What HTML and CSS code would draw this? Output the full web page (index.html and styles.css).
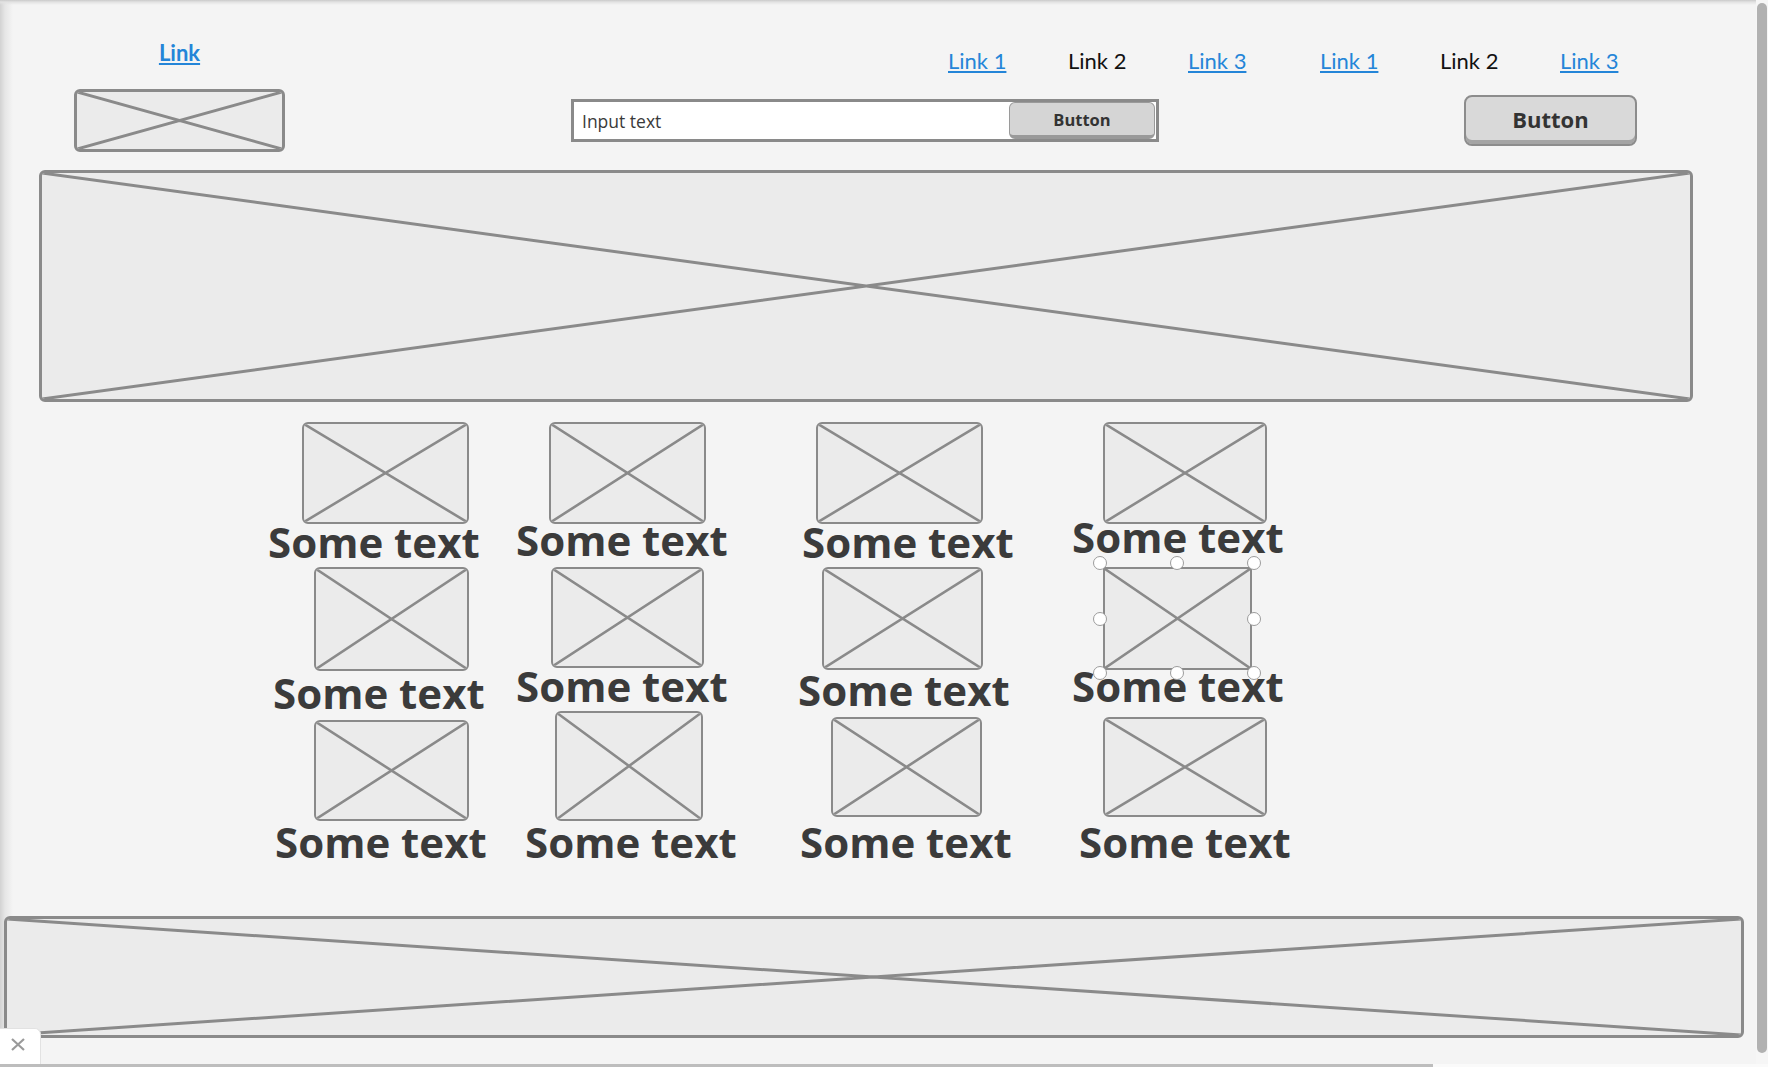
FILE: index.html
```html
<!DOCTYPE html>
<html lang="en">
<head>
<meta charset="utf-8">
<title>Wireframe</title>
<link rel="stylesheet" href="styles.css">
</head>
<body>
<div class="screen">
  <div class="canvas">
    <header class="header">
      <div class="brand">
        <a class="brand-link" href="#">Link</a>
        <div class="ph logo"><svg class="x" viewBox="0 0 100 100" preserveAspectRatio="none"><path d="M0 0L100 100M100 0L0 100"/></svg></div>
      </div>
      <div class="header-main">
        <nav class="nav">
          <div class="nav-group">
            <a class="nav-item" href="#">Link 1</a>
            <span class="nav-item current">Link 2</span>
            <a class="nav-item" href="#">Link 3</a>
          </div>
          <div class="nav-group">
            <a class="nav-item" href="#">Link 1</a>
            <span class="nav-item current">Link 2</span>
            <a class="nav-item" href="#">Link 3</a>
          </div>
        </nav>
        <div class="actions">
          <div class="search">
            <span class="search-text">Input text</span>
            <button class="search-btn" type="button">Button</button>
          </div>
          <button class="btn-main" type="button">Button</button>
        </div>
      </div>
    </header>

    <div class="ph hero"><svg class="x" viewBox="0 0 100 100" preserveAspectRatio="none"><path d="M0 0L100 100M100 0L0 100"/></svg></div>

    <section class="gallery">
      <div class="col col1">
        <div class="card"><div class="ph t11"><svg class="x" viewBox="0 0 100 100" preserveAspectRatio="none"><path d="M0 0L100 100M100 0L0 100"/></svg></div><div class="cap s11">Some text</div></div>
        <div class="card"><div class="ph t12"><svg class="x" viewBox="0 0 100 100" preserveAspectRatio="none"><path d="M0 0L100 100M100 0L0 100"/></svg></div><div class="cap s12">Some text</div></div>
        <div class="card"><div class="ph t13"><svg class="x" viewBox="0 0 100 100" preserveAspectRatio="none"><path d="M0 0L100 100M100 0L0 100"/></svg></div><div class="cap s13">Some text</div></div>
      </div>
      <div class="col col2">
        <div class="card"><div class="ph t21"><svg class="x" viewBox="0 0 100 100" preserveAspectRatio="none"><path d="M0 0L100 100M100 0L0 100"/></svg></div><div class="cap s21">Some text</div></div>
        <div class="card"><div class="ph t22"><svg class="x" viewBox="0 0 100 100" preserveAspectRatio="none"><path d="M0 0L100 100M100 0L0 100"/></svg></div><div class="cap s22">Some text</div></div>
        <div class="card"><div class="ph t23"><svg class="x" viewBox="0 0 100 100" preserveAspectRatio="none"><path d="M0 0L100 100M100 0L0 100"/></svg></div><div class="cap s23">Some text</div></div>
      </div>
      <div class="col col3">
        <div class="card"><div class="ph t31"><svg class="x" viewBox="0 0 100 100" preserveAspectRatio="none"><path d="M0 0L100 100M100 0L0 100"/></svg></div><div class="cap s31">Some text</div></div>
        <div class="card"><div class="ph t32"><svg class="x" viewBox="0 0 100 100" preserveAspectRatio="none"><path d="M0 0L100 100M100 0L0 100"/></svg></div><div class="cap s32">Some text</div></div>
        <div class="card"><div class="ph t33"><svg class="x" viewBox="0 0 100 100" preserveAspectRatio="none"><path d="M0 0L100 100M100 0L0 100"/></svg></div><div class="cap s33">Some text</div></div>
      </div>
      <div class="col col4">
        <div class="card"><div class="ph t41"><svg class="x" viewBox="0 0 100 100" preserveAspectRatio="none"><path d="M0 0L100 100M100 0L0 100"/></svg></div><div class="cap s41">Some text</div></div>
        <div class="card">
          <div class="sel t42">
            <div class="ph square"><svg class="x" viewBox="0 0 100 100" preserveAspectRatio="none"><path d="M0 0L100 100M100 0L0 100"/></svg></div>
            <span class="handle h-tl"></span><span class="handle h-tc"></span><span class="handle h-tr"></span>
            <span class="handle h-ml"></span><span class="handle h-mr"></span>
            <span class="handle h-bl"></span><span class="handle h-bc"></span><span class="handle h-br"></span>
          </div>
          <div class="cap s42">Some text</div>
        </div>
        <div class="card"><div class="ph t43"><svg class="x" viewBox="0 0 100 100" preserveAspectRatio="none"><path d="M0 0L100 100M100 0L0 100"/></svg></div><div class="cap s43">Some text</div></div>
      </div>
    </section>

    <div class="ph footer"><svg class="x" viewBox="0 0 100 100" preserveAspectRatio="none"><path d="M0 0L100 100M100 0L0 100"/></svg></div>

    <div class="close-tab"><svg class="close-x" viewBox="0 0 14 13"><path d="M1 1L13 12M13 1L1 12"/></svg></div>
  </div>
  <div class="vscroll"><div class="vthumb"></div></div>
</div>
<div class="hscroll"><div class="hthumb"></div></div>
</body>
</html>
```

FILE: styles.css
```css
* { box-sizing: border-box; }

html, body {
  margin: 0;
  padding: 0;
  width: 1768px;
  height: 1067px;
  overflow: hidden;
  background: #fafafa;
  font-family: "Open Sans", "Liberation Sans", sans-serif;
}

.screen {
  display: flex;
  width: 1768px;
  height: 1064px;
}

.canvas {
  position: relative;
  width: 1756px;
  height: 1064px;
  background:
    linear-gradient(to bottom, #c9c9c9 0, #e2e2e2 2px, rgba(244,244,244,0) 5px),
    linear-gradient(to right, #d2d2d2 0, #e6e6e6 5px, #f4f4f4 13px);
  background-color: #f4f4f4;
  overflow: hidden;
}

/* placeholder image */
.ph {
  background: #ebebeb;
  border: 2px solid #8a8a8a;
  border-radius: 6px;
  overflow: hidden;
}
.ph .x {
  display: block;
  width: 100%;
  height: 100%;
}
.ph .x path {
  stroke: #8a8a8a;
  stroke-width: 2.6;
  fill: none;
  vector-effect: non-scaling-stroke;
}

/* header */
.header {
  display: flex;
  align-items: flex-start;
}

.brand {
  margin-left: 74px;
  width: 211px;
  display: flex;
  flex-direction: column;
  align-items: center;
}

.brand-link {
  margin-top: 40px;
  font-family: Lato, "Open Sans", sans-serif;
  font-weight: 700;
  font-size: 22px;
  line-height: 26px;
  color: #2485d8;
  text-decoration: underline;
  text-decoration-thickness: 2px;
  text-underline-offset: 2px;
}

.logo {
  margin-top: 23px;
  width: 211px;
  height: 63px;
  border-width: 3px;
}
.logo .x path { stroke-width: 3; }

.header-main {
  display: flex;
  flex-direction: column;
}

.nav {
  display: flex;
  margin-left: 663px;
  margin-top: 48px;
  gap: 12px;
}
.nav-group {
  display: flex;
}
.nav-item {
  width: 120px;
  font-family: Lato, "Open Sans", sans-serif;
  font-size: 22px;
  line-height: 26px;
  color: #2485d8;
  text-decoration: underline;
  text-decoration-thickness: 2px;
  text-underline-offset: 2px;
}
.nav-item.current {
  color: #111;
  text-decoration: none;
}

.actions {
  display: flex;
  align-items: flex-start;
}

.search {
  margin-left: 286px;
  margin-top: 25px;
  width: 588px;
  height: 43px;
  border: 3px solid #8a8a8a;
  background: #fff;
  display: flex;
  align-items: stretch;
}
.search-text {
  flex: 1;
  padding-left: 8px;
  display: flex;
  align-items: center;
  font-size: 17.5px;
  color: #3a3a3a;
}
.search-btn {
  width: 146px;
  margin: 0 1px 0 0;
  padding: 0;
  background: #d5d5d5;
  border: 1px solid #9a9a9a;
  border-bottom: 4px solid #9a9a9a;
  border-radius: 6px;
  font-family: "Open Sans", sans-serif;
  font-weight: 700;
  font-size: 16.5px;
  color: #333;
}

.btn-main {
  margin-left: 305px;
  margin-top: 21px;
  width: 173px;
  height: 51px;
  padding: 0 0 3px;
  background: #d9d9d9;
  border: 2px solid #8c8c8c;
  border-radius: 8px;
  box-shadow: inset 0 -4px 0 #a4a4a4;
  font-family: "Open Sans", sans-serif;
  font-weight: 700;
  font-size: 22px;
  color: #333;
}

/* hero */
.hero {
  margin-top: 18px;
  margin-left: 39px;
  width: 1654px;
  height: 232px;
  border-width: 3px;
}
.hero .x path { stroke-width: 3; }

/* gallery */
.gallery {
  display: flex;
  align-items: flex-start;
  padding-left: 268px;
  margin-top: 20px;
}
.col {
  display: flex;
  flex-direction: column;
}
.col1 { width: 248px; }
.col2 { width: 282px; }
.col3 { width: 274px; }
.col4 { width: 230px; }

.card {
  display: flex;
  flex-direction: column;
  align-items: flex-start;
}

.cap {
  font-family: "Open Sans", sans-serif;
  font-weight: 700;
  font-size: 42px;
  line-height: 43px;
  color: #3b3b3b;
  white-space: nowrap;
}

/* column 1 */
.t11 { width: 167px; height: 102px; margin-left: 34px; }
.s11 { margin-top: -4px; margin-left: 0; }
.t12 { width: 155px; height: 104px; margin-left: 46px; margin-top: 4px; }
.s12 { margin-top: 0; margin-left: 5px; }
.t13 { width: 155px; height: 101px; margin-left: 46px; margin-top: 6px; }
.s13 { margin-top: -1px; margin-left: 7px; }

/* column 2 */
.t21 { width: 157px; height: 102px; margin-left: 33px; }
.s21 { margin-top: -6px; margin-left: 0; }
.t22 { width: 153px; height: 101px; margin-left: 35px; margin-top: 6px; }
.s22 { margin-top: -4px; margin-left: 0; }
.t23 { width: 148px; height: 110px; margin-left: 39px; margin-top: 4px; }
.s23 { margin-top: -1px; margin-left: 9px; }

/* column 3 */
.t31 { width: 167px; height: 102px; margin-left: 18px; }
.s31 { margin-top: -4px; margin-left: 4px; }
.t32 { width: 161px; height: 103px; margin-left: 24px; margin-top: 4px; }
.s32 { margin-top: -2px; margin-left: 0; }
.t33 { width: 151px; height: 100px; margin-left: 33px; margin-top: 6px; }
.s33 { margin-top: 3px; margin-left: 2px; }

/* column 4 */
.t41 { width: 164px; height: 102px; margin-left: 31px; }
.s41 { margin-top: -9px; margin-left: 0; }
.t42 { width: 149px; height: 103px; margin-left: 31px; margin-top: 9px; }
.s42 { margin-top: -6px; margin-left: 0; }
.t43 { width: 164px; height: 100px; margin-left: 31px; margin-top: 10px; }
.s43 { margin-top: 3px; margin-left: 7px; }

/* selected image with handles */
.sel {
  position: relative;
}
.sel .ph {
  width: 100%;
  height: 100%;
}
.ph.square { border-radius: 0; }

.handle {
  position: absolute;
  width: 14px;
  height: 14px;
  border-radius: 50%;
  background: #fff;
  border: 1px solid #9c9c9c;
}
.h-tl { left: -10px; top: -11px; }
.h-tc { left: 67px;  top: -11px; }
.h-tr { left: 144px; top: -11px; }
.h-ml { left: -10px; top: 45px; }
.h-mr { left: 144px; top: 45px; }
.h-bl { left: -10px; top: 99px; }
.h-bc { left: 67px;  top: 99px; }
.h-br { left: 144px; top: 99px; }

/* footer */
.footer {
  margin-top: 53px;
  margin-left: 4px;
  width: 1740px;
  height: 122px;
  border-width: 3px;
}
.footer .x path { stroke-width: 3; }

/* close tab overlay */
.close-tab {
  position: absolute;
  left: 0;
  bottom: 0;
  width: 41px;
  height: 36px;
  background: #fff;
  border: 1px solid #e2e2e2;
  border-left: none;
  border-bottom: none;
  border-top-right-radius: 6px;
}
.close-x {
  display: block;
  width: 14px;
  height: 13px;
  margin: 9px 0 0 11px;
}
.close-x path {
  stroke: #9a9a9a;
  stroke-width: 2.2;
  fill: none;
}

/* scrollbars */
.vscroll {
  width: 12px;
  height: 1064px;
  background: #f6f6f6;
  padding: 3px 1px 11px 1px;
}
.vthumb {
  width: 10px;
  height: 100%;
  background: #b1b1b1;
  border-radius: 5px;
}
.hscroll {
  height: 3px;
  background: #fafafa;
}
.hthumb {
  width: 1433px;
  height: 3px;
  background: #bdbdbd;
}
```
